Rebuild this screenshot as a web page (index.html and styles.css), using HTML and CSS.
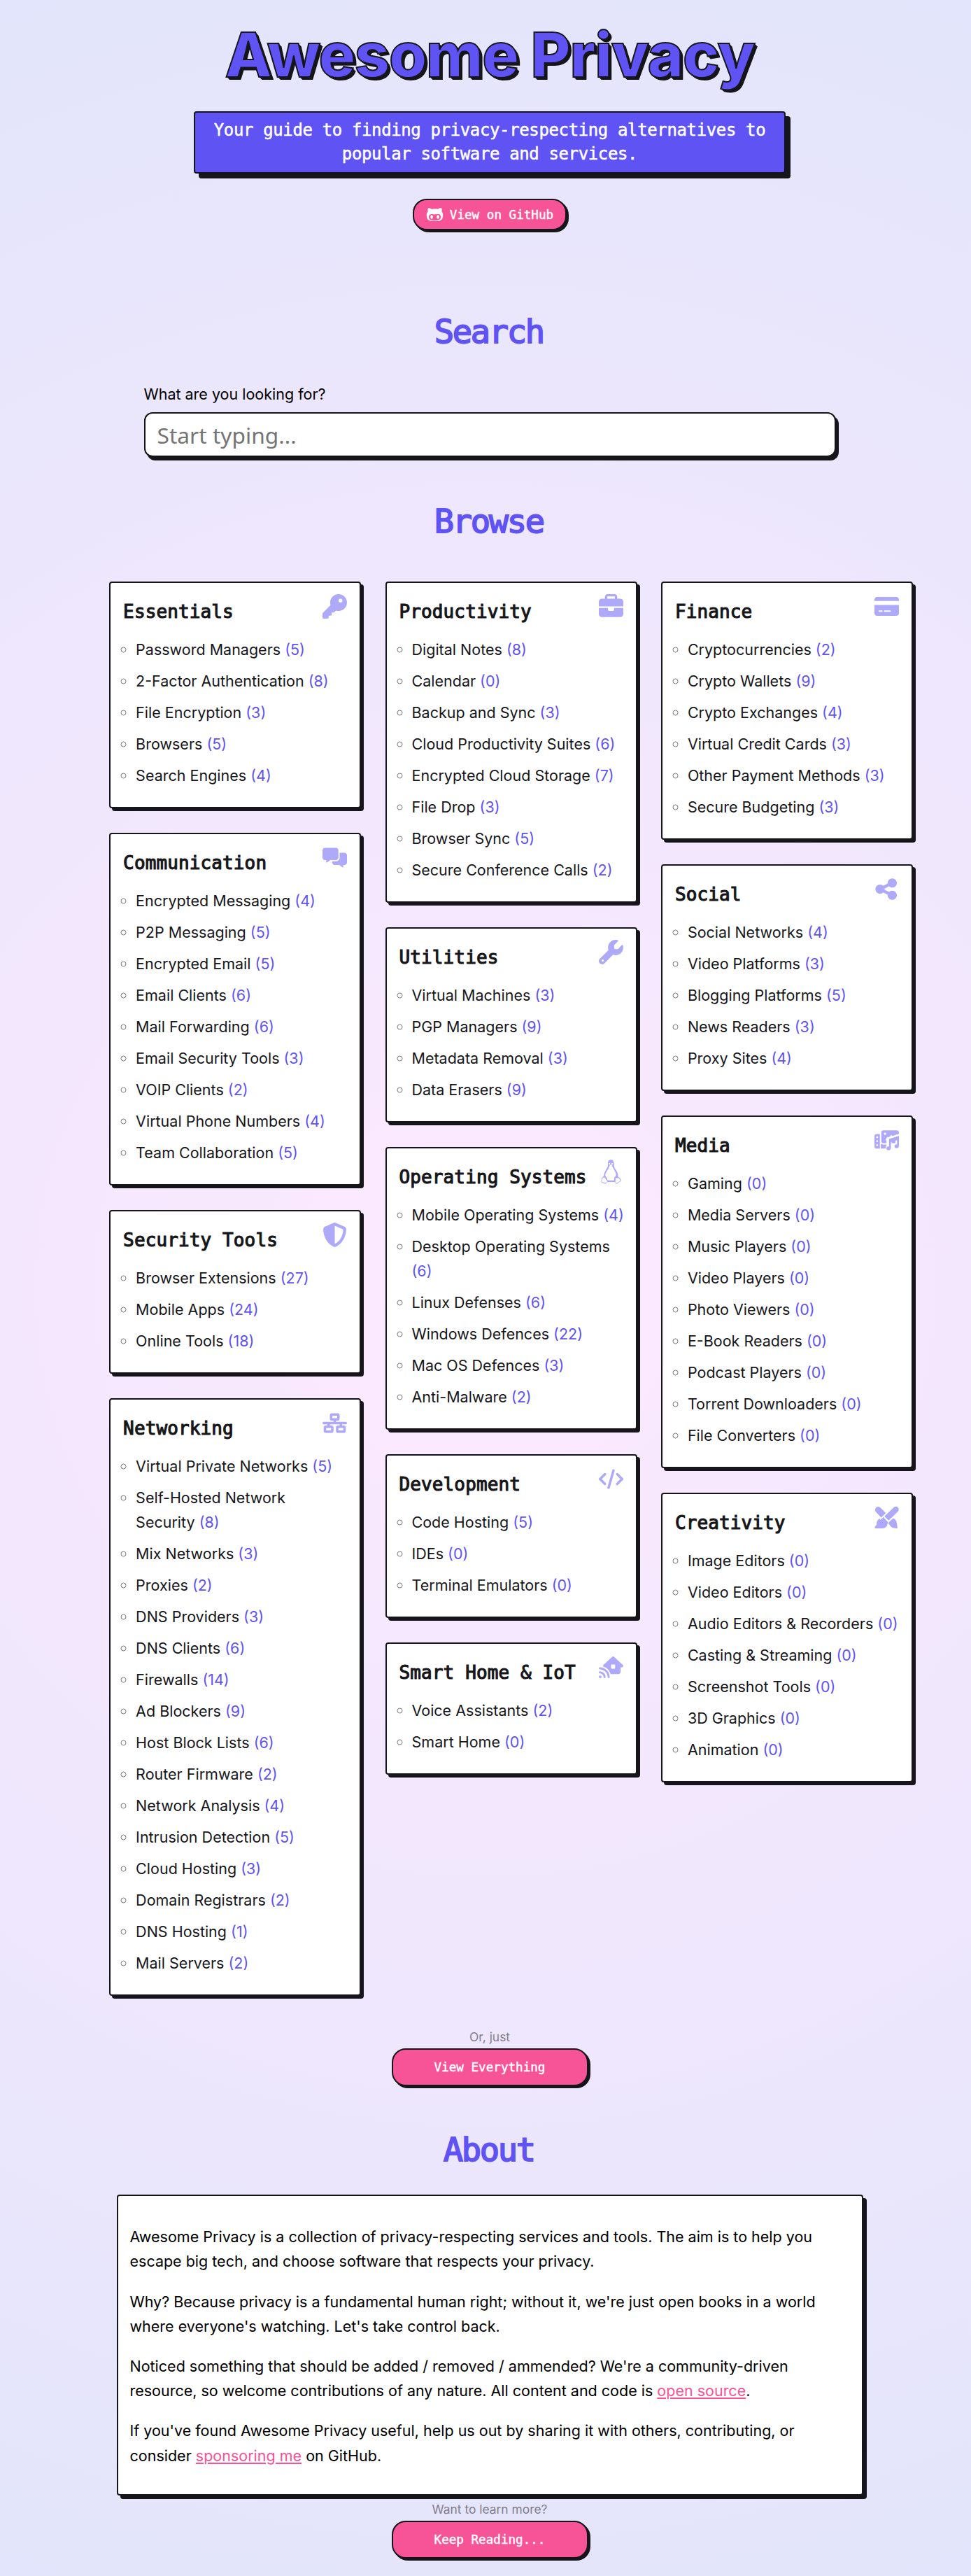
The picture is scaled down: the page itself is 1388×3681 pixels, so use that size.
FILE: index.html
```
<!DOCTYPE html>
<html lang="en">
<head>
<meta charset="utf-8">
<title>Awesome Privacy</title>
<link rel="stylesheet" href="styles.css">
</head>
<body>
<div class="page">
<header class="hero">
  <h1>Awesome Privacy</h1>
  <p class="tagline">Your guide to finding privacy-respecting alternatives to<br>popular software and services.</p>
  <a class="button button-small"><svg viewBox="0 0 480 512"><path d="M186.1 328.7c0 20.9-10.9 55.1-36.7 55.1s-36.7-34.2-36.7-55.1 10.9-55.1 36.7-55.1 36.7 34.2 36.7 55.1zM480 278.2c0 31.9-3.2 65.7-17.5 95-37.9 76.6-142.1 74.8-216.7 74.8-75.8 0-186.2 2.7-225.6-74.8-14.6-29-20.2-63.1-20.2-95 0-41.9 13.9-81.5 41.5-113.6-5.2-15.8-7.7-32.4-7.7-48.8 0-21.5 4.9-32.3 14.6-51.8 45.3 0 74.3 9 108.8 36 29-6.9 58.8-10 88.7-10 27 0 54.2 2.9 80.4 9.2 34-26.7 63-35.2 107.8-35.2 9.8 19.5 14.6 30.3 14.6 51.8 0 16.4-2.6 32.7-7.7 48.2 27.5 32.4 39 72.3 39 114.2zm-64.3 50.5c0-43.9-26.7-82.6-73.5-82.6-18.9 0-37 3.4-56 6-14.9 2.3-29.8 3.2-45.1 3.2-15.2 0-30.1-.9-45.1-3.2-18.7-2.6-37-6-56-6-46.8 0-73.5 38.7-73.5 82.6 0 87.8 80.4 101.3 150.4 101.3h48.2c70.3 0 150.6-13.4 150.6-101.3zm-82.6-55.1c-25.8 0-36.7 34.2-36.7 55.1s10.9 55.1 36.7 55.1 36.7-34.2 36.7-55.1-10.9-55.1-36.7-55.1z"/></svg>View on GitHub</a>
</header>
<section class="search">
  <h2>Search</h2>
  <label for="q">What are you looking for?</label>
  <input id="q" type="text" placeholder="Start typing...">
</section>
<section class="browse">
  <h2>Browse</h2>
  <div class="columns">
    <div class="column">
      <article class="card">
        <div class="card-head"><h3>Essentials</h3><svg viewBox="0 0 512 512"><path d="M336 352c97.2 0 176-78.8 176-176S433.2 0 336 0S160 78.8 160 176c0 18.7 2.9 36.8 8.3 53.7L7 391c-4.5 4.5-7 10.6-7 17v80c0 13.3 10.7 24 24 24h80c13.3 0 24-10.7 24-24V448h40c13.3 0 24-10.7 24-24V384h40c6.4 0 12.5-2.5 17-7l33.3-33.3c16.9 5.4 35 8.3 53.7 8.3zM376 96a40 40 0 1 1 0 80 40 40 0 1 1 0-80z"/></svg></div>
        <ul><li>Password Managers <i>(5)</i></li><li>2-Factor Authentication <i>(8)</i></li><li>File Encryption <i>(3)</i></li><li>Browsers <i>(5)</i></li><li>Search Engines <i>(4)</i></li></ul>
      </article>
      <article class="card">
        <div class="card-head"><h3>Communication</h3><svg viewBox="0 0 640 512"><path d="M64 0C28.7 0 0 28.7 0 64V256c0 35.3 28.7 64 64 64H96v48c0 6.1 3.4 11.6 8.8 14.3s11.9 2.1 16.8-1.5L202.7 320H352c35.3 0 64-28.7 64-64V64c0-35.3-28.7-64-64-64H64zM352 352H256v32c0 35.3 28.7 64 64 64H437.3l81.1 60.8c4.8 3.6 11.3 4.2 16.8 1.5s8.8-8.2 8.8-14.3V448h32c35.3 0 64-28.7 64-64V192c0-35.3-28.7-64-64-64H448V256c0 53-43 96-96 96z"/></svg></div>
        <ul><li>Encrypted Messaging <i>(4)</i></li><li>P2P Messaging <i>(5)</i></li><li>Encrypted Email <i>(5)</i></li><li>Email Clients <i>(6)</i></li><li>Mail Forwarding <i>(6)</i></li><li>Email Security Tools <i>(3)</i></li><li>VOIP Clients <i>(2)</i></li><li>Virtual Phone Numbers <i>(4)</i></li><li>Team Collaboration <i>(5)</i></li></ul>
      </article>
      <article class="card">
        <div class="card-head"><h3>Security Tools</h3><svg viewBox="0 0 512 512"><path d="M256 0c4.6 0 9.2 1 13.4 2.9L457.7 82.8c22 9.3 38.4 31 38.3 57.2c-.5 99.2-41.3 280.7-213.6 363.2c-16.7 8-36.1 8-52.8 0C57.3 420.7 16.5 239.2 16 140c-.1-26.2 16.3-47.9 38.3-57.2L242.7 2.9C246.8 1 251.4 0 256 0zm0 66.8V444.8C394 378 431.1 230.1 432 141.4L256 66.8z"/></svg></div>
        <ul><li>Browser Extensions <i>(27)</i></li><li>Mobile Apps <i>(24)</i></li><li>Online Tools <i>(18)</i></li></ul>
      </article>
      <article class="card">
        <div class="card-head"><h3>Networking</h3><svg viewBox="0 0 640 512"><path d="M256 64H384v64H256V64zM240 0c-26.5 0-48 21.5-48 48v96c0 26.5 21.5 48 48 48h48v32H32c-17.7 0-32 14.3-32 32s14.3 32 32 32h96v32H80c-26.5 0-48 21.5-48 48v96c0 26.5 21.5 48 48 48H240c26.5 0 48-21.5 48-48V368c0-26.5-21.5-48-48-48H192V288H448v32H400c-26.5 0-48 21.5-48 48v96c0 26.5 21.5 48 48 48H560c26.5 0 48-21.5 48-48V368c0-26.5-21.5-48-48-48H512V288h96c17.7 0 32-14.3 32-32s-14.3-32-32-32H352V192h48c26.5 0 48-21.5 48-48V48c0-26.5-21.5-48-48-48H240zM96 448V384H224v64H96zm320-64H544v64H416V384z"/></svg></div>
        <ul><li>Virtual Private Networks <i>(5)</i></li><li>Self-Hosted Network<br>Security <i>(8)</i></li><li>Mix Networks <i>(3)</i></li><li>Proxies <i>(2)</i></li><li>DNS Providers <i>(3)</i></li><li>DNS Clients <i>(6)</i></li><li>Firewalls <i>(14)</i></li><li>Ad Blockers <i>(9)</i></li><li>Host Block Lists <i>(6)</i></li><li>Router Firmware <i>(2)</i></li><li>Network Analysis <i>(4)</i></li><li>Intrusion Detection <i>(5)</i></li><li>Cloud Hosting <i>(3)</i></li><li>Domain Registrars <i>(2)</i></li><li>DNS Hosting <i>(1)</i></li><li>Mail Servers <i>(2)</i></li></ul>
      </article>
    </div>
    <div class="column">
      <article class="card">
        <div class="card-head"><h3>Productivity</h3><svg viewBox="0 0 512 512"><path d="M184 48H328c4.4 0 8 3.6 8 8V96H176V56c0-4.4 3.6-8 8-8zm-56 8V96H64C28.7 96 0 124.7 0 160v96H192 320 512V160c0-35.3-28.7-64-64-64H384V56c0-30.9-25.1-56-56-56H184c-30.9 0-56 25.1-56 56zM512 288H320v32c0 17.7-14.3 32-32 32H224c-17.7 0-32-14.3-32-32V288H0V416c0 35.3 28.7 64 64 64H448c35.3 0 64-28.7 64-64V288z"/></svg></div>
        <ul><li>Digital Notes <i>(8)</i></li><li>Calendar <i>(0)</i></li><li>Backup and Sync <i>(3)</i></li><li>Cloud Productivity Suites <i>(6)</i></li><li>Encrypted Cloud Storage <i>(7)</i></li><li>File Drop <i>(3)</i></li><li>Browser Sync <i>(5)</i></li><li>Secure Conference Calls <i>(2)</i></li></ul>
      </article>
      <article class="card">
        <div class="card-head"><h3>Utilities</h3><svg viewBox="0 0 512 512"><path d="M352 320c88.4 0 160-71.6 160-160c0-15.3-2.2-30.1-6.2-44.2c-3.1-10.8-16.4-13.2-24.3-5.3l-76.8 76.8c-3 3-7.1 4.7-11.3 4.7H336c-8.8 0-16-7.2-16-16V118.6c0-4.2 1.7-8.3 4.7-11.3l76.8-76.8c7.9-7.9 5.4-21.2-5.3-24.3C382.1 2.2 367.3 0 352 0C263.6 0 192 71.6 192 160c0 19.1 3.4 37.5 9.5 54.5L19.9 396.1C7.2 408.8 0 426.1 0 444.1C0 481.6 30.4 512 67.9 512c18 0 35.3-7.2 48-19.9L297.5 310.5c17 6.2 35.4 9.5 54.5 9.5zM80 408a24 24 0 1 1 0 48 24 24 0 1 1 0-48z"/></svg></div>
        <ul><li>Virtual Machines <i>(3)</i></li><li>PGP Managers <i>(9)</i></li><li>Metadata Removal <i>(3)</i></li><li>Data Erasers <i>(9)</i></li></ul>
      </article>
      <article class="card">
        <div class="card-head"><h3>Operating Systems</h3><svg viewBox="0 0 105 105"><path d="M52 1C42 1 38 9 39 18C40 28 37 33 31 43C26 52 22 59 22 68L13 80L14 97L28 104L38 96H68L76 104L96 91L90 78L82 74C84 60 77 49 71 41C65 34 66 28 65 17C64 6 60 1 52 1zM46 14a3 4 0 1 1 0 8 3 4 0 1 1 0-8zM57 14a3 4 0 1 1 0 8 3 4 0 1 1 0-8zM44 29L51 26L58 29L64 41C70 51 76 60 73 69L66 78L66 89H38L34 78L27 69C29 57 33 51 40 42z"/><path class="paper" d="M22 74L35 89L37 96L30 101L15 96L12 92L15 81zM71 79H87L90 85L95 90L78 101L70 98zM45 25L52 22L59 25L52 30z"/><path class="line" d="M22 73L35 89L37 96L30 102L12 97L10 92L14 81zM70 78H88L92 85L96 90L77 102L70 98z"/></svg></div>
        <ul><li>Mobile Operating Systems <i>(4)</i></li><li>Desktop Operating Systems<br><i>(6)</i></li><li>Linux Defenses <i>(6)</i></li><li>Windows Defences <i>(22)</i></li><li>Mac OS Defences <i>(3)</i></li><li>Anti-Malware <i>(2)</i></li></ul>
      </article>
      <article class="card">
        <div class="card-head"><h3>Development</h3><svg viewBox="0 0 640 512"><path class="thick" d="M160 128L32 256L160 384M480 128L608 256L480 384M384 32L256 480"/></svg></div>
        <ul><li>Code Hosting <i>(5)</i></li><li>IDEs <i>(0)</i></li><li>Terminal Emulators <i>(0)</i></li></ul>
      </article>
      <article class="card">
        <div class="card-head"><h3>Smart Home &amp; IoT</h3><svg viewBox="0 0 576 512"><path d="M357.7 8.5c-12.3-11.3-31.2-11.3-43.4 0l-208 192c-9.4 8.6-12.7 22-8.5 34c87.1 25.3 155.6 94.2 180.3 181.6H464c26.5 0 48-21.5 48-48V256h32c13.2 0 25-8.1 29.8-20.3s1.6-26.2-8.1-35.2l-208-192zM288 208c0-8.8 7.2-16 16-16h64c8.8 0 16 7.2 16 16v64c0 8.8-7.2 16-16 16H304c-8.8 0-16-7.2-16-16V208zM24 256c-13.3 0-24 10.7-24 24s10.7 24 24 24c101.6 0 184 82.4 184 184c0 13.3 10.7 24 24 24s24-10.7 24-24c0-128.1-103.9-232-232-232zm8 256a32 32 0 1 0 0-64 32 32 0 1 0 0 64zM0 376c0 13.3 10.7 24 24 24c48.6 0 88 39.4 88 88c0 13.3 10.7 24 24 24s24-10.7 24-24c0-75.1-60.9-136-136-136c-13.3 0-24 10.7-24 24z"/></svg></div>
        <ul><li>Voice Assistants <i>(2)</i></li><li>Smart Home <i>(0)</i></li></ul>
      </article>
    </div>
    <div class="column">
      <article class="card">
        <div class="card-head"><h3>Finance</h3><svg viewBox="0 0 576 512"><path d="M64 32C28.7 32 0 60.7 0 96v32H576V96c0-35.3-28.7-64-64-64H64zM576 224H0V416c0 35.3 28.7 64 64 64H512c35.3 0 64-28.7 64-64V224zM112 352h64c8.8 0 16 7.2 16 16s-7.2 16-16 16H112c-8.8 0-16-7.2-16-16s7.2-16 16-16zm112 16c0-8.8 7.2-16 16-16H368c8.8 0 16 7.2 16 16s-7.2 16-16 16H240c-8.8 0-16-7.2-16-16z"/></svg></div>
        <ul><li>Cryptocurrencies <i>(2)</i></li><li>Crypto Wallets <i>(9)</i></li><li>Crypto Exchanges <i>(4)</i></li><li>Virtual Credit Cards <i>(3)</i></li><li>Other Payment Methods <i>(3)</i></li><li>Secure Budgeting <i>(3)</i></li></ul>
      </article>
      <article class="card">
        <div class="card-head"><h3>Social</h3><svg viewBox="-20 0 512 512"><path d="M352 224c53 0 96-43 96-96s-43-96-96-96s-96 43-96 96c0 4 .2 8 .7 11.9l-94.1 47C145.4 170.2 121.9 160 96 160c-53 0-96 43-96 96s43 96 96 96c25.9 0 49.4-10.2 66.6-26.9l94.1 47c-.5 3.9-.7 7.8-.7 11.9c0 53 43 96 96 96s96-43 96-96s-43-96-96-96c-25.9 0-49.4 10.2-66.6 26.9l-94.1-47c.5-3.9 .7-7.8 .7-11.9s-.2-8-.7-11.9l94.1-47C302.6 213.8 326.1 224 352 224z"/></svg></div>
        <ul><li>Social Networks <i>(4)</i></li><li>Video Platforms <i>(3)</i></li><li>Blogging Platforms <i>(5)</i></li><li>News Readers <i>(3)</i></li><li>Proxy Sites <i>(4)</i></li></ul>
      </article>
      <article class="card">
        <div class="card-head"><h3>Media</h3><svg viewBox="0 0 104 84"><path d="M10 15H23V77H10Q0 77 0 67V25Q0 15 10 15zM38 0H94Q104 0 104 10V46Q104 54 94 54H38Q29 54 29 46V10Q29 0 38 0zM27 17V52Q27 60 36 60H62V77H27z"/><path class="paper" d="M8 25h7v7h-7zM8 42h7v7h-7zM8 59h7v7h-7zM45 9a5 5 0 1 1 0 10 5 5 0 1 1 0-10zM46 41L56 27L61 32L71 18L84 36V42H46z"/><path class="halo" d="M62 75V39L100 27V62"/><ellipse class="ring" cx="60" cy="75" rx="10" ry="8"/><ellipse class="ring" cx="93" cy="66" rx="10" ry="8"/><path class="note" d="M66 75V40L100 29V65"/><path d="M62 36L104 24V39L62 52z"/><ellipse cx="60" cy="76" rx="9" ry="8"/><ellipse cx="94" cy="67" rx="9" ry="8"/></svg></div>
        <ul><li>Gaming <i>(0)</i></li><li>Media Servers <i>(0)</i></li><li>Music Players <i>(0)</i></li><li>Video Players <i>(0)</i></li><li>Photo Viewers <i>(0)</i></li><li>E-Book Readers <i>(0)</i></li><li>Podcast Players <i>(0)</i></li><li>Torrent Downloaders <i>(0)</i></li><li>File Converters <i>(0)</i></li></ul>
      </article>
      <article class="card">
        <div class="card-head"><h3>Creativity</h3><svg viewBox="0 0 104 96"><path d="M7 6Q15 -2 24 5L50 31L31 51L6 24Q-1 15 7 6zM82 5Q91 -2 99 4Q107 12 100 22L60 61L42 43zM38 46L57 65Q56 84 46 90Q42 94 34 94H2Q0 84 6 82Q10 80 9 75Q10 55 26 51zM64 64L80 51Q93 57 95 72L98 94Q82 95 72 89L58 72z"/><path class="gap" d="M24 56L52 29M36 41L61 66M57 68L73 52"/></svg></div>
        <ul><li>Image Editors <i>(0)</i></li><li>Video Editors <i>(0)</i></li><li>Audio Editors &amp; Recorders <i>(0)</i></li><li>Casting &amp; Streaming <i>(0)</i></li><li>Screenshot Tools <i>(0)</i></li><li>3D Graphics <i>(0)</i></li><li>Animation <i>(0)</i></li></ul>
      </article>
    </div>
  </div>
</section>
<p class="hint">Or, just</p>
<a class="button">View Everything</a>
<section class="about">
  <h2>About</h2>
  <div class="about-box">
    <p>Awesome Privacy is a collection of privacy-respecting services and tools. The aim is to help you<br>escape big tech, and choose software that respects your privacy.</p>
    <p>Why? Because privacy is a fundamental human right; without it, we're just open books in a world<br>where everyone's watching. Let's take control back.</p>
    <p>Noticed something that should be added / removed / ammended? We're a community-driven<br>resource, so welcome contributions of any nature. All content and code is <a>open source</a>.</p>
    <p>If you've found Awesome Privacy useful, help us out by sharing it with others, contributing, or<br>consider <a>sponsoring me</a> on GitHub.</p>
  </div>
</section>
<p class="hint">Want to learn more?</p>
<a class="button">Keep Reading...</a>
</div>
</body>
</html>
```
FILE: styles.css
```
* { box-sizing: border-box; }
html { overflow: hidden; }
body {
  margin: 0;
  height: 3681px;
  overflow: hidden;
  font-family: Inter, "Liberation Sans", sans-serif;
  font-size: 21.5px;
  line-height: 35.2px;
  color: #000;
  background: radial-gradient(circle at 50% 50%, #fde9ff, #e2e5fb);
}
.page { width: 1400px; display: flex; flex-direction: column; align-items: center; }
h1, h2, h3, p, ul { margin: 0; }
.hero { display: flex; flex-direction: column; align-items: center; }
h1 {
  margin-top: 25px;
  font-size: 88px;
  line-height: 106px;
  font-weight: 800;
  letter-spacing: -1.4px;
  white-space: nowrap;
  color: #5f53f4;
  -webkit-text-stroke: 2px #16161d;
  text-shadow: 1px 1px #16161a, 2px 2px #16161a, 3px 3px #16161a, 4px 4px #16161a;
}
.tagline {
  width: 846px;
  height: 89px;
  margin-top: 28px;
  padding-top: 8px;
  border: 2px solid #16161a;
  border-radius: 4px;
  box-shadow: 7px 7px #16161a;
  background: #5f53f4;
  color: #fff;
  font: 24px/34px "DejaVu Sans Mono", monospace;
  letter-spacing: -.37px;
  -webkit-text-stroke: .5px #fff;
  text-align: center;
  white-space: nowrap;
}
.button {
  display: flex;
  align-items: center;
  justify-content: center;
  width: 281px;
  height: 54px;
  border: 2px solid #16161a;
  border-radius: 20px;
  box-shadow: 3px 3px #16161a;
  background: #f75497;
  color: #fff;
  font: 17.6px/24px "DejaVu Sans Mono", monospace;
  -webkit-text-stroke: .4px #fff;
}
.button-small { width: 220px; height: 45px; margin-top: 36px; }
.button-small svg { width: 25px; height: 25px; margin-right: 9px; fill: #fff; }
h2 {
  font: 47px/60px "DejaVu Sans Mono", monospace;
  letter-spacing: -2.3px;
  text-indent: -2.3px;
  color: #5f53f4;
  -webkit-text-stroke: 1.8px #5f53f4;
  text-align: center;
}
.search { width: 989px; margin-top: 115px; display: flex; flex-direction: column; }
label { margin-top: 42px; }
input {
  height: 64px;
  margin-top: 8px;
  padding: 0 16px 0 17px;
  border: 2px solid #16161a;
  border-radius: 12px;
  box-shadow: 4px 5px #16161a;
  background: #fff;
  font: 31.7px "Noto Sans", sans-serif;
}
input::placeholder { color: #757575; }
.browse { margin-top: 62px; }
.columns { display: grid; grid-template-columns: repeat(3, 360px); gap: 34.4px; margin: 56px 0 0 61px; }
.column { display: flex; flex-direction: column; gap: 35px; }
.card {
  padding: 16px 18px 22px;
  border: 2px solid #16161a;
  border-radius: 4px;
  box-shadow: 4px 4px #16161a;
  background: #fff;
  color: #16161a;
}
.card-head { display: flex; justify-content: space-between; align-items: flex-start; height: 57px; }
h3 {
  padding-top: 9px;
  font: 26px/32px "DejaVu Sans Mono", monospace;
  letter-spacing: .12px;
  -webkit-text-stroke: 1.1px #16161a;
  white-space: nowrap;
}
.card-head svg { width: 35px; height: 35px; fill: #afa9f9; }
.card-head .paper { fill: #fff; }
.card-head .line { fill: none; stroke: #afa9f9; stroke-width: 2; }
.card-head .thick { fill: none; stroke: #afa9f9; stroke-width: 64; stroke-linecap: round; stroke-linejoin: round; }
.card-head .halo { fill: none; stroke: #fff; stroke-width: 22; }
.card-head .ring { fill: none; stroke: #fff; stroke-width: 7; }
.card-head .note { fill: none; stroke: #afa9f9; stroke-width: 8; }
.card-head .gap { fill: none; stroke: #fff; stroke-width: 5; }
ul { padding: 0 0 0 18px; list-style: circle; }
li { padding: 5px 0; white-space: nowrap; line-height: 35px; }
li::marker { color: #77777c; }
i { font-style: normal; color: #5f53f4; }
.hint { margin-top: 8px; font-size: 17.4px; line-height: 24px; color: #817e8b; }
.hint + .button { margin-top: 4px; }
.browse + .hint { margin-top: 47px; }
.about { margin-top: 61px; }
.about-box {
  width: 1067px;
  height: 430px;
  margin-top: 34px;
  padding: 41px 17px;
  border: 2px solid #16161a;
  border-radius: 4px;
  box-shadow: 5px 5px #16161a;
  background: #fff;
  white-space: nowrap;
}
.about-box p { margin-bottom: 22px; }
.about-box a { color: #f75497; text-decoration: underline; }
```
